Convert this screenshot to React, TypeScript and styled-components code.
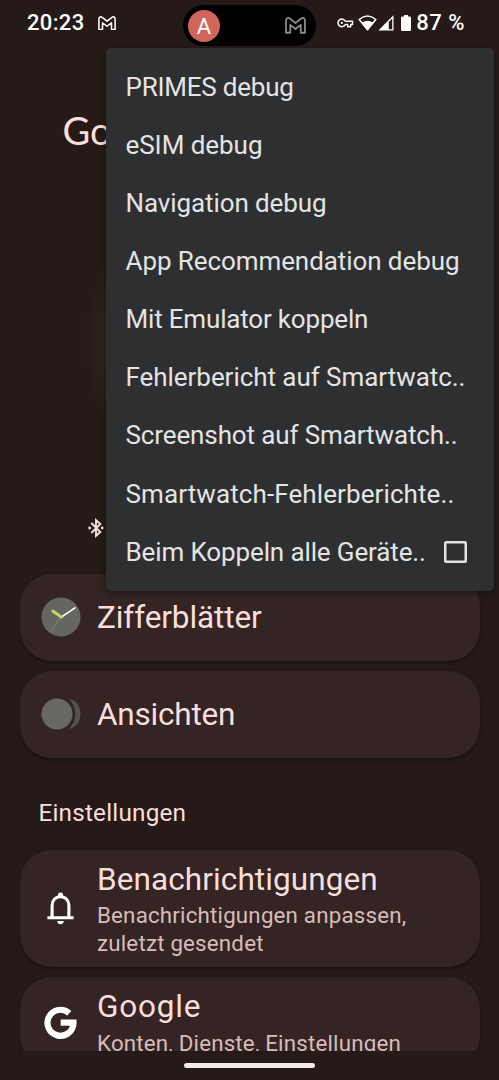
import React from "react";
import styled, { createGlobalStyle } from "styled-components";

const GlobalStyle = createGlobalStyle`
  *, *::before, *::after { box-sizing: border-box; }
  body { margin: 0; background: #251a18; }
`;

const Screen = styled.div`
  position: relative;
  display: flex;
  flex-direction: column;
  width: 499px;
  height: 1080px;
  overflow: hidden;
  background: #251a18;
  font-family: Roboto, "Liberation Sans", sans-serif;
  color: #f9dedc;
`;

const StatusBar = styled.header`
  display: flex;
  align-items: center;
  height: 46px;
  padding: 0 34px 0 27px;
  color: #fff;
  flex: none;
`;

const StatusText = styled.span<{ $spacing?: number }>`
  font-size: 22px;
  font-weight: 500;
  line-height: 26px;
  letter-spacing: ${(p) => p.$spacing ?? 0}px;
  white-space: nowrap;
`;

const StatusIcons = styled.div`
  display: flex;
  align-items: center;
  margin-left: auto;
`;

const Cutout = styled.div`
  position: absolute;
  top: 5px;
  left: 183px;
  display: flex;
  align-items: center;
  justify-content: space-between;
  width: 133px;
  height: 41px;
  padding: 0 10px 0 5px;
  border-radius: 21px;
  background: #000;
`;

const Avatar = styled.div`
  width: 32px;
  height: 32px;
  border-radius: 50%;
  background: #d0665b;
  color: #fff;
  font-size: 22px;
  line-height: 34px;
  text-align: center;
`;

const Content = styled.main`
  display: flex;
  flex-direction: column;
  height: 1005px;
  padding: 0 19.5px;
  overflow: hidden;
  flex: none;
`;

const DeviceName = styled.h1`
  margin: 61px 0 0 43px;
  height: 46px;
  font-family: Lato, Roboto, sans-serif;
  font-size: 38px;
  font-weight: 400;
  line-height: 46px;
  white-space: nowrap;
`;

const WatchGlow = styled.div`
  width: 350px;
  height: 350px;
  margin: 14px 0 0 59px;
  flex: none;
  background: radial-gradient(circle closest-side, rgba(255, 236, 228, 0.12) 60%, rgba(255, 236, 228, 0.08) 80%, rgba(255, 236, 228, 0.02) 91%, transparent 98%);
`;

const Connection = styled.div`
  display: flex;
  align-items: center;
  height: 22px;
  margin: 0 0 34.5px 68px;
  flex: none;
`;

const Card = styled.section<{ $height: number; $gap?: number }>`
  display: flex;
  align-items: center;
  gap: 16.5px;
  flex: none;
  height: ${(p) => p.$height}px;
  margin-bottom: ${(p) => p.$gap ?? 10}px;
  padding: 0 20px 0 21px;
  border-radius: 32px;
  background: #342424;
  box-shadow: 0 1.5px 3px rgba(0, 0, 0, 0.35);
`;

const IconSlot = styled.div`
  display: flex;
  align-items: center;
  justify-content: center;
  width: 40px;
  flex: none;
`;

const CardBody = styled.div<{ $stacked?: boolean }>`
  align-self: ${(p) => (p.$stacked ? "flex-start" : "center")};
  padding-top: ${(p) => (p.$stacked ? 11 : 1)}px;
`;

const CardTitle = styled.h2<{ $spacing?: number }>`
  margin: 0;
  font-size: 31.5px;
  font-weight: 400;
  line-height: 37px;
  letter-spacing: ${(p) => p.$spacing ?? 0}px;
  white-space: nowrap;
`;

const CardNote = styled.p`
  margin: 4.5px 0 0;
  color: #d8bcb9;
  font-size: 22.3px;
  line-height: 27.8px;
  letter-spacing: 0.2px;
  white-space: nowrap;
`;

const SectionLabel = styled.h3`
  height: 30px;
  margin: 40.5px 0 21.5px 19px;
  flex: none;
  font-size: 24.3px;
  font-weight: 400;
  line-height: 30px;
  letter-spacing: 0.2px;
`;

const NavBar = styled.footer`
  display: flex;
  justify-content: center;
  height: 29px;
  padding-top: 12px;
`;

const NavHandle = styled.div`
  width: 131px;
  height: 5px;
  border-radius: 3px;
  background: #efeceb;
`;

const Menu = styled.ul`
  position: absolute;
  top: 48px;
  left: 106px;
  width: 388px;
  height: 542.5px;
  margin: 0;
  padding: 10px 27.5px 9px 19.5px;
  border-radius: 5px;
  background: #2e2f31;
  box-shadow: 0 2px 6px rgba(0, 0, 0, 0.4);
  color: #e4e4e4;
  list-style: none;
`;

const MenuItem = styled.li<{ $spacing?: number }>`
  display: flex;
  align-items: center;
  justify-content: space-between;
  height: 58.15px;
  font-size: 26px;
  line-height: 31px;
  letter-spacing: ${(p) => p.$spacing ?? 0}px;
  white-space: nowrap;
`;

const CheckBox = styled.span`
  width: 22.5px;
  height: 22.5px;
  box-shadow: inset 0 0 0 2.5px #e4e4e4;
  border-radius: 2.5px;
`;

const entries: { label: string; spacing: number; checkable?: boolean }[] = [
  { label: "PRIMES debug", spacing: -0.22 },
  { label: "eSIM debug", spacing: -0.05 },
  { label: "Navigation debug", spacing: -0.1 },
  { label: "App Recommendation debug", spacing: -0.08 },
  { label: "Mit Emulator koppeln", spacing: -0.18 },
  { label: "Fehlerbericht auf Smartwatc..", spacing: -0.05 },
  { label: "Screenshot auf Smartwatch..", spacing: -0.12 },
  { label: "Smartwatch-Fehlerberichte..", spacing: 0.1 },
  { label: "Beim Koppeln alle Geräte..", spacing: -0.12, checkable: true },
];

const MailIcon = ({ width, color, stroke }: { width: number; color: string; stroke: number }) => (
  <svg width={width} height={width * 0.8} viewBox="0 0 20 16" fill="none" stroke={color} strokeWidth={stroke} strokeLinejoin="round">
    <path d="M1 3.2C1 1 3.2.3 4.6 1.5L10 5.7l5.400-4.2C16.800.3 19 1 19 3.200V15h-4V7.500l-5 3.900-5-3.900V15H1Z" />
  </svg>
);

const KeyIcon = () => (
  <svg width="17" height="12" viewBox="0 0 17 12" fill="none" stroke="#fff" strokeWidth="1.5" strokeLinejoin="round">
    <path d="M8.300 4.300H15.500V7.500H13.700V9.800H10.700V7.500H8.300A3.800 3.800 0 1 1 8.300 4.300Z" />
    <circle cx="4.800" cy="5.900" r="1.100" fill="#fff" stroke="none" />
  </svg>
);

const WifiIcon = () => (
  <svg width="19" height="16" viewBox="0 0 19 16">
    <path d="M1.200 4.500Q9.500-2.400 17.800 4.500L9.500 14.700Z" fill="none" stroke="#fff" strokeWidth="1.500" strokeLinejoin="round" />
    <path d="M3.700 7.700Q9.500 3.700 15.300 7.700L9.500 15.200Z" fill="#fff" />
  </svg>
);

const SignalIcon = () => (
  <svg width="16" height="16" viewBox="0 0 16 16">
    <path d="M.3 15.500 15.500.3V15.500Z" fill="#fff" />
    <path d="M10.800 7 14.200 3.600V14.200H10.800Z" fill="#251a18" />
  </svg>
);

const BatteryIcon = () => (
  <svg width="10" height="16" viewBox="0 0 10 16">
    <path d="M3 0h4v1.600h1.700q1.300 0 1.300 1.300v11.800q0 1.300-1.300 1.300H1.300Q0 16 0 14.700V2.900Q0 1.600 1.300 1.600H3Z" fill="#fff" />
  </svg>
);

const BluetoothIcon = () => (
  <svg width="16" height="20" viewBox="0 0 16 20">
    <path d="M3.300 5 12.300 14 8 17.800V2.200L12.300 6 3.300 15" fill="none" stroke="#f9dedc" strokeWidth="1.900" />
    <circle cx="1.600" cy="10" r="1.400" fill="#f9dedc" />
    <circle cx="14.200" cy="10" r="1.400" fill="#f9dedc" />
  </svg>
);

const WatchFaceIcon = () => (
  <svg width="40" height="40" viewBox="0 0 40 40">
    <circle cx="20" cy="20" r="19.500" fill="#666660" />
    <path d="M20 20 9.500 34.500" stroke="#96968e" strokeWidth=".6" />
    <path d="M20.500 20 34 10.800" stroke="#fff" strokeWidth="1.600" strokeLinecap="round" />
    <path d="M20.300 20 11.700 14" stroke="#c7d36f" strokeWidth="2.800" strokeLinecap="round" />
  </svg>
);

const TilesIcon = () => (
  <svg width="40" height="32" viewBox="0 0 40 32">
    <circle cx="16" cy="16" r="15.500" fill="#686862" />
    <path d="M27.500.8C36 2 39.500 9 39.500 16S36 29.700 27.500 31C31.500 27.800 34.200 22.500 34.200 16S31.500 4.200 27.500.8Z" fill="#52514b" />
  </svg>
);

const BellIcon = () => (
  <svg width="27" height="33" viewBox="0 0 27 33">
    <path d="M5.100 25.500V13.500C5.100 8.600 8.300 4.800 13.500 4.800S21.900 8.600 21.900 13.500V25.500" fill="none" stroke="#fff" strokeWidth="3.100" />
    <circle cx="13.500" cy="3.200" r="2.600" fill="#fff" />
    <path d="M.4 24.300H26.600V27.300H.4ZM10.200 29H16.800Q16.300 32.300 13.500 32.300T10.200 29Z" fill="#fff" />
  </svg>
);

const GoogleIcon = () => (
  <svg width="33" height="33" viewBox="0 0 33 33">
    <path d="M25.300 7.200A13 13 0 1 0 29.500 16.700H16.700" fill="none" stroke="#fff" strokeWidth="6.200" />
  </svg>
);

const Gap = styled.span<{ $w: number }>`
  width: ${(p) => p.$w}px;
`;

export default function App() {
  return (
    <Screen>
      <GlobalStyle />
      <StatusBar>
        <StatusText $spacing={0.35}>20:23</StatusText>
        <Gap $w={13} />
        <MailIcon width={18} color="#fff" stroke={1.7} />
        <StatusIcons>
          <KeyIcon />
          <Gap $w={4} />
          <WifiIcon />
          <Gap $w={1} />
          <SignalIcon />
          <Gap $w={7} />
          <BatteryIcon />
          <Gap $w={5} />
          <StatusText $spacing={0.5}>87 %</StatusText>
        </StatusIcons>
      </StatusBar>

      <Content>
        <DeviceName>Google</DeviceName>
        <WatchGlow />
        <Connection>
          <BluetoothIcon />
        </Connection>

        <Card $height={87}>
          <IconSlot><WatchFaceIcon /></IconSlot>
          <CardBody><CardTitle $spacing={-0.1}>Zifferblätter</CardTitle></CardBody>
        </Card>
        <Card $height={87} $gap={0}>
          <IconSlot><TilesIcon /></IconSlot>
          <CardBody><CardTitle $spacing={-0.2}>Ansichten</CardTitle></CardBody>
        </Card>

        <SectionLabel>Einstellungen</SectionLabel>

        <Card $height={117.5}>
          <IconSlot><BellIcon /></IconSlot>
          <CardBody $stacked>
            <CardTitle $spacing={0.1}>Benachrichtigungen</CardTitle>
            <CardNote>Benachrichtigungen anpassen,<br />zuletzt gesendet</CardNote>
          </CardBody>
        </Card>
        <Card $height={91}>
          <IconSlot><GoogleIcon /></IconSlot>
          <CardBody $stacked>
            <CardTitle $spacing={0.8}>Google</CardTitle>
            <CardNote>Konten, Dienste, Einstellungen</CardNote>
          </CardBody>
        </Card>
      </Content>

      <NavBar><NavHandle /></NavBar>

      <Cutout>
        <Avatar>A</Avatar>
        <MailIcon width={21} color="#8c8c8c" stroke={1.7} />
      </Cutout>

      <Menu>
        {entries.map((entry) => (
          <MenuItem key={entry.label} $spacing={entry.spacing}>
            {entry.label}
            {entry.checkable && <CheckBox />}
          </MenuItem>
        ))}
      </Menu>
    </Screen>
  );
}
